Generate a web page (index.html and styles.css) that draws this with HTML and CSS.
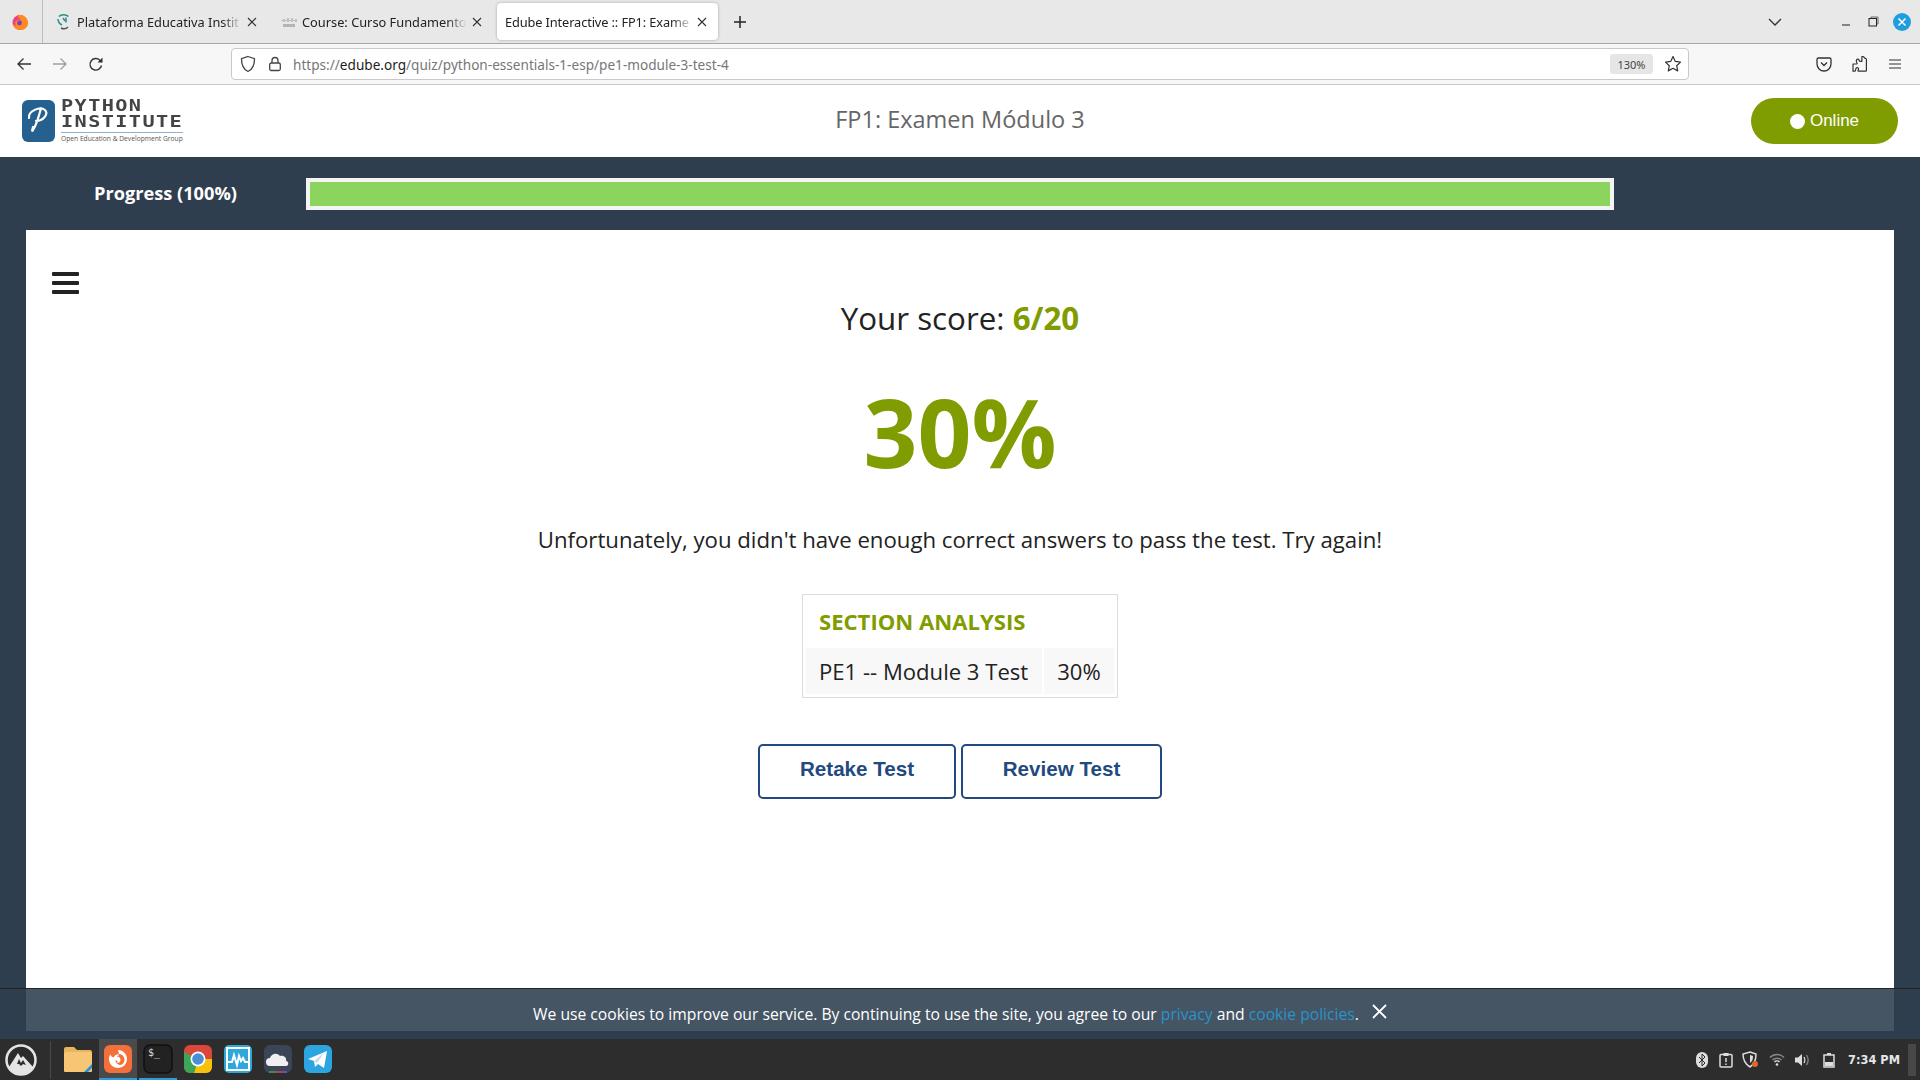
FILE: index.html
```html
<!DOCTYPE html>
<html lang="en">
<head>
<meta charset="utf-8">
<title>Edube Interactive :: FP1: Examen Módulo 3</title>
<link rel="stylesheet" href="styles.css">
</head>
<body>
<div class="tabbar">
  <div class="ff-slot">
    <svg width="18" height="20" viewBox="0 0 18 20"><circle cx="9" cy="10.500" r="7.500" fill="#e8467c"/><path d="M6 3c5-1 11 2 11 8 0 4-3 7-7.500 7C5 18 2 15 1.500 11c1 2 2.500 3 4 3-1-1-1.500-2.500-1-4 1-2 3-2 4-2 .5 0 1.500.5 2 1-1-2-3-3-4.500-6z" fill="#ff8a1f"/><circle cx="8.500" cy="11" r="2.400" fill="#7a3dd6"/></svg>
  </div>
  <div class="tab">
    <svg class="favicon" width="16" height="18" viewBox="0 0 16 18"><path d="M3 3.500C5 1 10 1 12.500 3.500M2 6c0 3 2 5 4 6M10 4.500v5M7 5l2 3" fill="none" stroke="#2a8f8a" stroke-width="1.500"/><path d="M5 15c2 1 5 1 7-1" fill="none" stroke="#555" stroke-width="1.500"/></svg>
    <span class="tab-title">Plataforma Educativa Instit</span>
    <svg class="tab-x" width="10" height="10" viewBox="0 0 10 10"><path d="M1 1l8 8M9 1l-8 8" stroke="#333" stroke-width="1.100"/></svg>
  </div>
  <div class="tab">
    <svg class="favicon" width="16" height="16" viewBox="0 0 16 16"><path d="M1 6v1M3 5v3M5 6v1M7 4v4M9 6v1M11 4v4M13 6v1M15 5v3" stroke="#9a9a9a" stroke-width="1"/><rect x="2" y="10" width="12" height="3" fill="#b5b5b5"/></svg>
    <span class="tab-title">Course: Curso Fundamento</span>
    <svg class="tab-x" width="10" height="10" viewBox="0 0 10 10"><path d="M1 1l8 8M9 1l-8 8" stroke="#333" stroke-width="1.100"/></svg>
  </div>
  <div class="tab tab-active">
    <span class="tab-title">Edube Interactive :: FP1: Exame</span>
    <svg class="tab-x" width="10" height="10" viewBox="0 0 10 10"><path d="M1 1l8 8M9 1l-8 8" stroke="#333" stroke-width="1.100"/></svg>
  </div>
  <svg class="new-tab" width="14" height="14" viewBox="0 0 14 14"><path d="M7 1v12M1 7h12" stroke="#222" stroke-width="1.500"/></svg>
  <div class="win-controls">
    <svg class="chev" width="14" height="8" viewBox="0 0 14 8"><path d="M1 1l6 6 6-6" fill="none" stroke="#333" stroke-width="1.300"/></svg>
    <svg class="win-min" width="10" height="10" viewBox="0 0 10 10"><path d="M1 8h8" stroke="#222" stroke-width="1"/></svg>
    <svg class="win-max" width="11" height="11" viewBox="0 0 11 11"><path d="M3 2V1h7v7H9" fill="none" stroke="#666"/><rect x="1" y="2.500" width="7.500" height="7.500" fill="none" stroke="#222"/></svg>
    <svg class="win-close" width="18" height="18" viewBox="0 0 18 18"><circle cx="9" cy="9" r="9" fill="#1f9ede"/><path d="M5.500 5.500l7 7M12.500 5.500l-7 7" stroke="#fff" stroke-width="1.500"/></svg>
  </div>
</div>

<div class="navbar">
  <svg class="nav-back" width="16" height="16" viewBox="0 0 16 16"><path d="M15 8H2M7.500 2.500L2 8l5.500 5.500" fill="none" stroke="#333" stroke-width="1.300"/></svg>
  <svg class="nav-fwd" width="16" height="16" viewBox="0 0 16 16"><path d="M1 8h13M8.500 2.500L14 8l-5.500 5.500" fill="none" stroke="#a0a0a0" stroke-width="1.300"/></svg>
  <svg class="nav-reload" width="16" height="16" viewBox="0 0 16 16"><path d="M13.500 9.500a5.800 5.800 0 1 1-1.600-5.300L14 6" fill="none" stroke="#333" stroke-width="1.400"/><path d="M14.500 1.500V6.500H9.500z" fill="#333"/></svg>
  <div class="urlbar">
    <svg width="16" height="18" viewBox="0 0 16 18"><path d="M8 1.500l6.500 2.200c0 6-1.500 10.500-6.500 12.800C3 14.200 1.500 9.700 1.500 3.700z" fill="none" stroke="#444" stroke-width="1.300"/></svg>
    <svg class="lock" width="14" height="16" viewBox="0 0 14 16"><path d="M4 7V4.500a3 3 0 0 1 6 0V7" fill="none" stroke="#444" stroke-width="1.300"/><rect x="1.700" y="7" width="10.600" height="7.500" rx="1.500" fill="none" stroke="#444" stroke-width="1.300"/></svg>
    <span class="url">https://<b class="url-host">edube.org</b>/quiz/python-essentials-1-esp/pe1-module-3-test-4</span>
    <span class="zoom-badge">130%</span>
    <svg class="star" width="18" height="18" viewBox="0 0 18 18"><path d="M9 1.500l2.300 4.900 5.200.7-3.800 3.600 1 5.200L9 13.300l-4.700 2.600 1-5.200L1.500 7.100l5.200-.7z" fill="none" stroke="#333" stroke-width="1.200" stroke-linejoin="round"/></svg>
  </div>
  <div class="nav-right">
    <svg width="16" height="16" viewBox="0 0 16 16"><path d="M2.500 2h11A1.500 1.500 0 0 1 15 3.500V8a7 7 0 0 1-14 0V3.500A1.500 1.500 0 0 1 2.500 2z" fill="none" stroke="#333" stroke-width="1.300"/><path d="M5 6.500l3 3 3-3" fill="none" stroke="#333" stroke-width="1.300"/></svg>
    <svg width="16" height="18" viewBox="0 0 16 18"><path d="M1 9h3.500c.8 0 .8-.8.300-1.400C3.500 5.500 5 3.500 6.500 4.200c.8.400.5 1.300.9 1.800.3.300.6.300 1 .3h1.500V1.500h1.500c.8 1.500 1.500 2 3 2.500v11.500c0 .4-.3.700-.7.700H6.500c-.6 0-.7-.6-.3-1.100 1.200-1.500-.5-3.200-1.900-2.200-1 .7-.3 3.300-1.300 3.300H1z" fill="none" stroke="#333" stroke-width="1.200" stroke-linejoin="round"/></svg>
    <svg width="14" height="12" viewBox="0 0 14 12"><path d="M1 2h12M1 6h12M1 10h12" stroke="#333" stroke-width="1.200"/></svg>
  </div>
</div>

<div class="page">
  <header class="site-header">
    <div class="logo">
      <svg class="logo-mark" width="33" height="42" viewBox="0 0 33 42"><rect width="33" height="42" rx="6" fill="#25608f"/><path d="M7 18c-1-7 11-12 16-8 4 4-2 11-9 11M19 8c-2 8-4 16-8 22-1 2-1 0 0-3" fill="none" stroke="#fff" stroke-width="2.200" stroke-linecap="round"/></svg>
      <div class="logo-text">
        <span class="logo-l1">PYTHON</span>
        <span class="logo-l2">INSTITUTE</span>
        <span class="logo-rule"></span>
        <span class="logo-l3">Open Education &amp; Development Group</span>
      </div>
    </div>
    <h1 class="quiz-title">FP1: Examen Módulo 3</h1>
    <div class="online"><i class="online-dot"></i>Online</div>
  </header>

  <div class="progress-row">
    <div class="progress-label">Progress (100%)</div>
    <div class="progress-track"><div class="progress-fill"></div></div>
  </div>

  <main class="content">
    <div class="hamburger"><i></i><i></i><i></i></div>
    <p class="score">Your score: <b class="green">6/20</b></p>
    <p class="percent">30%</p>
    <p class="message">Unfortunately, you didn't have enough correct answers to pass the test. Try again!</p>
    <div class="analysis">
      <h2 class="analysis-title">SECTION ANALYSIS</h2>
      <table class="analysis-table">
        <tr><td class="cell-name">PE1 -- Module 3 Test</td><td class="cell-val">30%</td></tr>
      </table>
    </div>
    <div class="actions">
      <a class="btn btn-retake">Retake Test</a>
      <a class="btn btn-review">Review Test</a>
    </div>
  </main>

  <div class="cookie">
    <div class="cookie-inner">
      <span>We use cookies to improve our service. By continuing to use the site, you agree to our <a class="link">privacy</a> and <a class="link">cookie policies</a>.</span>
      <svg class="cookie-x" width="15" height="15" viewBox="0 0 15 15"><path d="M1 1l13 13M14 1L1 14" stroke="#fff" stroke-width="1.800"/></svg>
    </div>
  </div>
</div>

<footer class="taskbar">
  <svg class="start" width="32" height="32" viewBox="0 0 32 32"><circle cx="16" cy="16" r="14.500" fill="#2b2b2b" stroke="#e4e4e4" stroke-width="2.500"/><path d="M4 23l9-14 3 5 2-2 10 11c-3 5-7 7-12 7S7 28 4 23z" fill="#e4e4e4"/><path d="M12 20l2-5 2 4 2-3 3 5-3-1-2 2-2-2z" fill="#2b2b2b"/></svg>
  <div class="task-sep"></div>
  <div class="task-apps">
    <div class="task-app">
      <svg width="28" height="26" viewBox="0 0 28 26"><path d="M0 3a2 2 0 0 1 2-2h8l3 3h13a2 2 0 0 1 2 2v18a2 2 0 0 1-2 2H2a2 2 0 0 1-2-2z" fill="#e8b45e"/><rect y="6" width="28" height="20" rx="1.500" fill="#f7c675"/><path d="M20 26l8-8v4l-4 4z" fill="#2d8fd6"/></svg>
    </div>
    <div class="task-app task-running task-focus">
      <svg width="28" height="28" viewBox="0 0 28 28"><rect width="28" height="28" rx="6" fill="#f4703a"/><path d="M14 5c5 0 9 4 9 9s-4 9-9 9-9-4-9-9c0-2 .6-3.500 1.500-4.500C7 12 9 12.500 10 12c1-2 3-3 5-2.500-.5 1-1 1.500-2 2 2 0 3.500 1.500 3.500 3.500s-2 3.500-4 3c2-.5 1-3-1-2.500 0 3 4 6 7 3.500 3-2.500 2.500-7-.5-9-1-.7-2-1-3-1z" fill="#fff"/></svg>
    </div>
    <div class="task-app task-running">
      <svg width="30" height="30" viewBox="0 0 30 30"><rect x="1" y="1" width="28" height="28" rx="6" fill="#222" stroke="#111" stroke-width="1.500"/><text class="term-text" x="5" y="12">$_</text></svg>
    </div>
    <div class="task-app">
      <svg width="28" height="28" viewBox="0 0 28 28"><rect width="28" height="28" rx="6" fill="#d9483b"/><path d="M14 14L28 14V22a6 6 0 0 1-6 6H10z" fill="#f4c20d"/><path d="M14 14L10 28H6a6 6 0 0 1-6-6V7z" fill="#3da556"/><circle cx="14" cy="14" r="7.500" fill="#fff"/><circle cx="14" cy="14" r="5.800" fill="#4a8fd6"/></svg>
    </div>
    <div class="task-app">
      <svg width="28" height="28" viewBox="0 0 28 28"><rect width="28" height="28" rx="5" fill="#2ea8dc"/><rect x="3" y="3" width="22" height="22" fill="none" stroke="#fff" stroke-width="2"/><path d="M4 17h4l2-7 3 10 2-9 2 5 2-3 2 4h3" fill="none" stroke="#fff" stroke-width="2"/></svg>
    </div>
    <div class="task-app">
      <svg width="28" height="28" viewBox="0 0 28 28"><rect width="28" height="28" rx="6" fill="#3a4656"/><path d="M6 21a4 4 0 0 1 0-8c1-4 7-6 10-2 4-1 7 2 6 5 3 0 3 5 0 5z" fill="#f0f0f0"/><path d="M5 27h6" stroke="#3da556" stroke-width="1.500"/><path d="M11 27h6" stroke="#d9483b" stroke-width="1.500"/><path d="M17 27h6" stroke="#8a4fd6" stroke-width="1.500"/></svg>
    </div>
    <div class="task-app">
      <svg width="28" height="28" viewBox="0 0 28 28"><rect width="28" height="28" rx="6" fill="#2ca5e0"/><path d="M4 14L23 6l-3 17-6-4-3 3-1-6z" fill="#fff"/><path d="M10 16l10-8-7 10z" fill="#c8daea"/></svg>
    </div>
  </div>
  <div class="tray">
    <svg width="12" height="16" viewBox="0 0 12 16"><rect width="12" height="16" rx="6" fill="#ddd"/><path d="M3 5l6 6-3 3V2l3 3-6 6" fill="none" stroke="#2b2b2b" stroke-width="1"/></svg>
    <svg width="14" height="16" viewBox="0 0 14 16"><rect x="1" y="2.500" width="12" height="12.500" rx="1" fill="none" stroke="#ddd" stroke-width="1.500"/><rect x="4.500" y="1" width="5" height="3" fill="#ddd"/><path d="M7 6v4M7 11.500v1.500" stroke="#ddd" stroke-width="1.500"/></svg>
    <svg width="17" height="17" viewBox="0 0 17 17"><path d="M8 1l6 2c0 6-1 10-6 13C3 13 1 9 1 3z" fill="none" stroke="#ddd" stroke-width="1.500"/><path d="M8 4l3 1c0 3-.5 5-3 7z" fill="#ddd"/><circle cx="13" cy="13" r="3" fill="#e8622a"/></svg>
    <svg width="16" height="13" viewBox="0 0 16 13"><path d="M1 4.500c4-4 10-4 14 0M3.500 7c2.500-2.500 6.500-2.500 9 0" fill="none" stroke="#888" stroke-width="1.500"/><path d="M5.500 9c1.500-1.500 3.500-1.500 5 0" fill="none" stroke="#ddd" stroke-width="1.500"/><circle cx="8" cy="11.500" r="1.300" fill="#ddd"/></svg>
    <svg width="16" height="14" viewBox="0 0 16 14"><path d="M1 4.500h3L8 1v12L4 9.500H1z" fill="#ddd"/><path d="M10 4c1 1.500 1 4.500 0 6" fill="none" stroke="#ddd" stroke-width="1.300"/><path d="M12.500 2c2 3 2 7 0 10" fill="none" stroke="#888" stroke-width="1.300"/></svg>
    <svg width="12" height="16" viewBox="0 0 12 16"><path d="M1 3h10v12H1z" fill="none" stroke="#ddd" stroke-width="1.500"/><rect x="4" y="1" width="4" height="2" fill="#ddd"/><rect x="2" y="10" width="8" height="4" fill="#ddd"/></svg>
    <span class="clock">7:34 PM</span>
  </div>
  <div class="show-desktop"></div>
</footer>
</body>
</html>
```
FILE: styles.css
```css
* { box-sizing: border-box; }
html, body { margin: 0; height: 100%; }
body {
  width: 1920px;
  height: 1080px;
  overflow: hidden;
  display: flex;
  flex-direction: column;
  font-family: "Open Sans", "Liberation Sans", sans-serif;
  background: #fff;
}
p, h1, h2 { margin: 0; }

/* browser tabs */
.tabbar {
  height: 44px;
  flex: none;
  display: flex;
  align-items: center;
  background: #e8e8e8;
  border-bottom: 1px solid #a6a6a6;
  font-family: "Noto Sans", sans-serif;
  font-size: 12.800px;
  color: #222;
}
.ff-slot {
  width: 43px;
  height: 43px;
  display: flex;
  align-items: center;
  padding-left: 11px;
  border-right: 1px solid #bdbdbd;
  margin-right: 4px;
}
.tab {
  width: 222px;
  height: 37px;
  margin-right: 3px;
  padding: 0 12px 0 9px;
  display: flex;
  align-items: center;
  gap: 5px;
  border-radius: 4px;
}
.tab-active {
  background: #fff;
  box-shadow: 0 0 3px rgba(0,0,0,.3);
  padding-left: 8px;
  padding-right: 11px;
  margin-right: 15px;
  width: 221px;
  gap: 3px;
}
.tab-active .tab-title { letter-spacing: -.12px; }
.favicon { flex: none; }
.tab-title {
  flex: 1;
  min-width: 0;
  white-space: nowrap;
  overflow: hidden;
  -webkit-mask-image: linear-gradient(to right, #000 88%, transparent);
  mask-image: linear-gradient(to right, #000 88%, transparent);
}
.tab-x { flex: none; }
.new-tab { flex: none; }
.win-controls {
  margin-left: auto;
  display: flex;
  align-items: center;
  padding-right: 9px;
}
.chev { margin-right: 59px; }
.win-min { margin-right: 17px; }
.win-max { margin-right: 14px; }

/* nav toolbar */
.navbar {
  height: 41px;
  flex: none;
  display: flex;
  align-items: center;
  padding-left: 16px;
  background: #f7f7f7;
  border-bottom: 1px solid #c8c8c8;
}
.nav-fwd { margin-left: 20px; }
.nav-reload { margin-left: 20px; }
.urlbar {
  width: 1458px;
  height: 32px;
  margin-left: 127px;
  padding: 0 6px 0 8px;
  display: flex;
  align-items: center;
  background: #fff;
  border: 1px solid #c9c9c9;
  border-radius: 4px;
  font-family: "Noto Sans", sans-serif;
  font-size: 13.600px;
}
.lock { margin-left: 12px; }
.url { margin-left: 11px; color: #777; white-space: nowrap; }
.url-host { font-weight: 400; color: #1c1c1c; }
.zoom-badge {
  margin-left: auto;
  width: 43px;
  height: 20px;
  display: flex;
  align-items: center;
  justify-content: center;
  background: #e6e6e6;
  border-radius: 3px;
  font-size: 11px;
  color: #444;
}
.star { margin-left: 11px; }
.nav-right {
  margin-left: 127px;
  display: flex;
  align-items: center;
  gap: 20px;
}

/* page */
.page {
  flex: 1;
  min-height: 0;
  position: relative;
  display: flex;
  flex-direction: column;
  background: #2f3e4f;
}
.site-header {
  height: 72px;
  flex: none;
  display: grid;
  grid-template-columns: 1fr auto 1fr;
  align-items: center;
  padding: 0 22px;
  background: #fff;
}
.logo { display: flex; align-items: center; gap: 6px; margin-top: -1px; }
.logo-mark { flex: none; }
.logo-text { display: flex; flex-direction: column; width: 122px; }
.logo-l1, .logo-l2 {
  font: 700 15px/16px "DejaVu Sans Mono", monospace;
  letter-spacing: 1.020px;
  color: #444;
  white-space: nowrap;
  transform: scaleX(1.350);
  transform-origin: left center;
}
.logo-rule {
  height: 1px;
  margin-top: 2px;
  background: #8fb0cc;
}
.logo-l3 {
  font: 400 6.700px/10px "Open Sans", sans-serif;
  margin-top: 1px;
  color: #555;
  white-space: nowrap;
}
.quiz-title {
  font-size: 23.500px;
  font-weight: 400;
  color: #666;
  margin-top: -4px;
}
.online {
  justify-self: end;
  width: 147px;
  height: 46px;
  display: flex;
  align-items: center;
  justify-content: center;
  gap: 5px;
  background: #7f9c00;
  border-radius: 23px;
  font: 400 17px "Liberation Sans", sans-serif;
  color: #fff;
}
.online-dot {
  width: 15px;
  height: 15px;
  background: #fff;
  border-radius: 50%;
}

/* progress */
.progress-row {
  height: 73px;
  flex: none;
  display: flex;
  align-items: center;
  padding-left: 94px;
}
.progress-label {
  width: 212px;
  font-size: 18.200px;
  font-weight: 700;
  color: #fff;
  margin-top: -1px;
}
.progress-track {
  width: 1308px;
  height: 32px;
  border: 4px solid #f4f4f4;
}
.progress-fill { height: 100%; background: #8bd45e; }

/* main */
.content {
  flex: 1;
  position: relative;
  margin: 0 26px;
  background: #fff;
  display: flex;
  flex-direction: column;
  align-items: center;
  color: #222;
}
.hamburger {
  position: absolute;
  left: 26px;
  top: 42px;
  width: 27px;
  display: flex;
  flex-direction: column;
  gap: 5px;
}
.hamburger i { display: block; height: 4px; background: #222; border-radius: 1px; }
.score {
  margin-top: 66px;
  font-size: 31.300px;
  line-height: 44px;
  color: #222;
}
.green { color: #7f9c00; font-weight: 700; }
.percent {
  margin-top: 34px;
  font-size: 94.500px;
  line-height: 116px;
  font-weight: 700;
  color: #7f9c00;
}
.message {
  margin-top: 34px;
  font-size: 22.200px;
  line-height: 32px;
  color: #222;
}
.analysis {
  width: 316px;
  margin-top: 38px;
  padding: 3px;
  border: 1.500px solid #ddd;
}
.analysis-title {
  padding: 5px 0 0 13px;
  font-size: 22.100px;
  line-height: 36px;
  font-weight: 700;
  color: #7f9c00;
  height: 50px;
}
.analysis-table { border-collapse: separate; border-spacing: 2px 0; margin: 0 -2px; width: calc(100% + 4px); }
.analysis-table td {
  height: 46px;
  padding: 0;
  background: #f8f8f8;
  font-size: 22.100px;
  color: #222;
}
.analysis-table .cell-name { padding-left: 13px; width: 236px; }
.cell-val { text-align: center; }
.actions {
  margin-top: 46px;
  display: flex;
  gap: 5px;
}
.btn {
  height: 55px;
  display: flex;
  align-items: center;
  justify-content: center;
  padding-bottom: 6px;
  background: #fff;
  border: 2.500px solid #234a80;
  border-radius: 5px;
  font: 700 20.600px "Liberation Sans", sans-serif;
  color: #234a80;
}
.btn-retake { width: 198px; }
.btn-review { width: 201px; }

/* cookie */
.cookie {
  position: absolute;
  left: 0;
  right: 0;
  bottom: 0;
  height: 51px;
  background: #2f3e4f;
  border-top: 1px solid #222;
}
.cookie-inner {
  height: 42px;
  margin: 0 26px;
  padding-top: 8px;
  display: flex;
  align-items: center;
  justify-content: center;
  gap: 13px;
  background: #455564;
  font-size: 15.680px;
  color: #fff;
}
.link { color: #2a93c9; }
.cookie-x { margin-top: -5px; }

/* desktop panel */
.taskbar {
  height: 41px;
  flex: none;
  display: flex;
  align-items: center;
  padding-left: 5px;
  background: #2d2d2d;
}
.start { flex: none; }
.task-sep { width: 1px; height: 38px; margin-left: 13px; background: #4a4a4a; }
.task-apps { display: flex; margin-left: 8px; gap: 2px; }
.task-app {
  width: 38px;
  height: 41px;
  display: flex;
  align-items: center;
  justify-content: center;
  border-bottom: 2px solid transparent;
}
.task-running { border-bottom-color: #2f9bd8; }
.task-focus { background: #4a4a4a; }
.term-text { font: 400 10px "DejaVu Sans Mono", monospace; fill: #ddd; }
.tray {
  margin-left: auto;
  display: flex;
  align-items: center;
}
.tray svg:nth-child(1) { margin-right: 11px; }
.tray svg:nth-child(2) { margin-right: 8.500px; }
.tray svg:nth-child(3) { margin-right: 10.500px; }
.tray svg:nth-child(4) { margin-right: 9px; }
.tray svg:nth-child(5) { margin-right: 13px; }
.clock {
  margin-left: 13px;
  font: 700 11.400px "DejaVu Sans", sans-serif;
  color: #e6e6e6;
}
.show-desktop {
  width: 8px;
  height: 32px;
  margin: 0 4px 0 8px;
  background: #484848;
}
```
